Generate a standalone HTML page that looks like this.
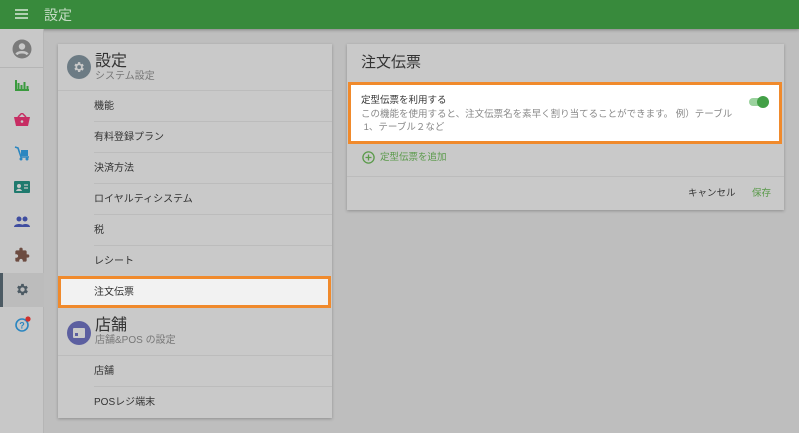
<!DOCTYPE html>
<html><head><meta charset="utf-8"><style>
*{box-sizing:border-box;margin:0;padding:0}
body{width:799px;height:433px;overflow:hidden;background:#bebebe;font-family:"Liberation Sans","Noto Sans CJK JP",sans-serif;position:relative;color:#333}
div{line-height:1.2}
.top{position:absolute;left:0;top:0;width:799px;height:29px;background:#388a3c;box-shadow:0 1px 3px rgba(0,0,0,.3)}
.top .t{position:absolute;left:44px;top:7px;color:#c5dcc5;font-size:14px}
.side{position:absolute;left:0;top:29px;width:44px;height:404px;background:#c8c8c8;border-right:1px solid #b5b5b5}
.ic{position:absolute;left:12px}
.card{position:absolute;background:#c9c9c9;box-shadow:0 1px 3px rgba(0,0,0,.25)}
.it{position:absolute;left:36px;font-size:10px;color:#333;margin-top:2px}
.ln{position:absolute;left:36px;right:0;height:1px;background:#bcbcbc}
</style></head><body>
<div class="top"><svg style="position:absolute;left:15px;top:9px" width="13" height="10"><path d="M0 1h13M0 5h13M0 9h13" stroke="#d8e8d8" stroke-width="1.6"/></svg><div class="t">設定</div></div>
<div class="side">
<svg class="ic" style="top:10px;left:12px" width="20" height="20" viewBox="0 0 20 20"><circle cx="10" cy="10" r="9.5" fill="#7a7a7a"/><circle cx="10" cy="7.5" r="3.2" fill="#c8c8c8"/><path d="M4.5 15.5c1.5-3 9.5-3 11 0" stroke="#c8c8c8" stroke-width="2.6" fill="none"/></svg>
<div style="position:absolute;left:0;top:38px;width:44px;height:1px;background:#b5b5b5"></div>
<svg class="ic" style="top:50px;left:15px" width="14" height="12"><path d="M1 1v10h13M3.5 4v6M6.5 6v4M9.5 3v7M12.5 7v3" stroke="#3a9a3e" stroke-width="2" fill="none"/></svg>
<svg class="ic" style="top:84px;left:14px" width="16" height="13"><path d="M0 4h16l-2 9H2z" fill="#c72d63"/><path d="M4 4l4-4 4 4" stroke="#c72d63" stroke-width="1.5" fill="none"/><circle cx="8" cy="8.5" r="1.3" fill="#c8c8c8"/></svg>
<svg class="ic" style="top:117px;left:14px" width="16" height="15"><path d="M1 1l3 1 3 9h8" stroke="#2b86c0" stroke-width="1.6" fill="none"/><rect x="7" y="4" width="7" height="6" fill="#2b86c0"/><circle cx="7" cy="13" r="1.5" fill="#2b86c0"/><circle cx="13" cy="13" r="1.5" fill="#2b86c0"/></svg>
<svg class="ic" style="top:152px;left:14px" width="16" height="12"><rect width="16" height="12" rx="1" fill="#1f7a6e"/><circle cx="5" cy="5" r="2" fill="#c8c8c8"/><path d="M2 10c1-3 5-3 6 0z" fill="#c8c8c8"/><path d="M10 4h4M10 7h4" stroke="#c8c8c8" stroke-width="1.3"/></svg>
<svg class="ic" style="top:187px;left:14px" width="16" height="11"><circle cx="5" cy="3" r="2.5" fill="#3f4da0"/><circle cx="11" cy="3" r="2.5" fill="#3f4da0"/><path d="M0 11c0-4 10-4 10 0zM7 11c0-4 9-4 9 0z" fill="#3f4da0"/></svg>
<svg class="ic" style="top:218px;left:14px" width="16" height="16" viewBox="0 0 24 24"><path d="M20.5 11H19V7c0-1.1-.9-2-2-2h-4V3.5a2.5 2.5 0 0 0-5 0V5H4c-1.1 0-2 .9-2 2v3.8h1.5c1.5 0 2.7 1.2 2.7 2.7S5 16.2 3.5 16.2H2V20c0 1.1.9 2 2 2h3.8v-1.5c0-1.5 1.2-2.7 2.7-2.7s2.7 1.2 2.7 2.7V22H17c1.1 0 2-.9 2-2v-4h1.5a2.5 2.5 0 0 0 0-5z" fill="#6d4c41"/></svg>
<div style="position:absolute;left:0;top:244px;width:44px;height:34px;background:#bcbcbc;border-left:3px solid #4c5a63"></div>
<svg class="ic" style="top:253px;left:15px" width="15" height="15" viewBox="0 0 24 24"><path d="M19.4 13a7.6 7.6 0 0 0 0-2l2.1-1.6-2-3.5-2.5 1a7.3 7.3 0 0 0-1.7-1L15 3h-4l-.4 2.7a7.3 7.3 0 0 0-1.7 1l-2.5-1-2 3.5L6.6 11a7.6 7.6 0 0 0 0 2l-2.1 1.6 2 3.5 2.5-1a7.3 7.3 0 0 0 1.7 1L11 21h4l.4-2.7a7.3 7.3 0 0 0 1.7-1l2.5 1 2-3.5zM13 15.5A3.5 3.5 0 1 1 13 8.5a3.5 3.5 0 0 1 0 7z" fill="#4c5a63" transform="translate(-1 0)"/></svg>
<svg class="ic" style="top:287px;left:14px" width="18" height="16"><circle cx="8" cy="9" r="6" stroke="#2b86c0" stroke-width="1.6" fill="none"/><text x="5.3" y="12.5" font-size="9" font-weight="bold" fill="#2b86c0" font-family="Liberation Sans">?</text><circle cx="14" cy="3" r="2.6" fill="#d0312d"/></svg>
</div>

<div class="card" style="left:58px;top:44px;width:274px;height:374px">
<svg style="position:absolute;left:9px;top:11px" width="24" height="24" viewBox="0 0 24 24"><circle cx="12" cy="12" r="12" fill="#6c7b84"/><g transform="translate(5.5 5.5) scale(.55)"><path d="M19.4 13a7.6 7.6 0 0 0 0-2l2.1-1.6-2-3.5-2.5 1a7.3 7.3 0 0 0-1.7-1L15 3h-4l-.4 2.7a7.3 7.3 0 0 0-1.7 1l-2.5-1-2 3.5L6.6 11a7.6 7.6 0 0 0 0 2l-2.1 1.6 2 3.5 2.5-1a7.3 7.3 0 0 0 1.7 1L11 21h4l.4-2.7a7.3 7.3 0 0 0 1.7-1l2.5 1 2-3.5zM13 15.5A3.5 3.5 0 1 1 13 8.5a3.5 3.5 0 0 1 0 7z" fill="#c9c9c9" transform="translate(-1 0)"/></g></svg>
<div style="position:absolute;left:37px;top:10px;font-size:16px;line-height:16px;color:#333">設定</div>
<div style="position:absolute;left:37px;top:28px;font-size:10px;line-height:10px;color:#777">システム設定</div>
<div style="position:absolute;left:0;right:0;top:46px;height:1px;background:#bcbcbc"></div>
<div class="it" style="top:55px">機能</div><div class="ln" style="top:77px"></div>
<div class="it" style="top:86px">有料登録プラン</div><div class="ln" style="top:108px"></div>
<div class="it" style="top:117px">決済方法</div><div class="ln" style="top:139px"></div>
<div class="it" style="top:148px">ロイヤルティシステム</div><div class="ln" style="top:170px"></div>
<div class="it" style="top:179px">税</div><div class="ln" style="top:201px"></div>
<div class="it" style="top:210px">レシート</div>
<div style="position:absolute;left:0;top:232px;width:273px;height:32px;background:#f2f2f2;border:3px solid #f08a2c"></div>
<div class="it" style="top:241px">注文伝票</div>
<svg style="position:absolute;left:9px;top:277px" width="24" height="24"><circle cx="12" cy="12" r="12" fill="#5c5fa0"/><rect x="6" y="7" width="12" height="10" rx="1" fill="#c9c9c9"/><rect x="8" y="12" width="3" height="3" fill="#5c5fa0"/></svg>
<div style="position:absolute;left:37px;top:274px;font-size:16px;line-height:16px;color:#333">店舗</div>
<div style="position:absolute;left:37px;top:292px;font-size:10px;line-height:10px;color:#777">店舗&amp;POS の設定</div>
<div style="position:absolute;left:0;right:0;top:311px;height:1px;background:#bcbcbc"></div>
<div class="it" style="top:320px">店舗</div><div class="ln" style="top:342px"></div>
<div class="it" style="top:351px">POSレジ端末</div>
</div>

<div class="card" style="left:347px;top:44px;width:437px;height:166px">
<div style="position:absolute;left:14px;top:10px;font-size:15px;color:#333">注文伝票</div>
<div style="position:absolute;left:1px;top:38px;width:434px;height:62px;background:#fff;border:3px solid #f08a2c"></div>
<div style="position:absolute;left:14px;top:51px;font-size:9.5px;color:#333">定型伝票を利用する</div>
<div style="position:absolute;left:14px;top:64px;width:380px;white-space:nowrap;font-size:9.5px;color:#888;line-height:13px">この機能を使用すると、注文伝票名を素早く割り当てることができます。 例）テーブル<br>&nbsp;1、テーブル２など</div>
<div style="position:absolute;left:402px;top:54px;width:20px;height:8px;border-radius:4px;background:#9bd29e"></div>
<div style="position:absolute;left:410px;top:52px;width:12px;height:12px;border-radius:6px;background:#43a047"></div>
<svg style="position:absolute;left:15px;top:107px" width="13" height="13"><circle cx="6.5" cy="6.5" r="5.6" stroke="#5a9a4a" stroke-width="1.3" fill="none"/><path d="M6.5 3.5v6M3.5 6.5h6" stroke="#5a9a4a" stroke-width="1.3"/></svg>
<div style="position:absolute;left:33px;top:108px;font-size:9.5px;color:#5a9a4a">定型伝票を追加</div>
<div style="position:absolute;left:0;right:0;top:132px;height:1px;background:#bcbcbc"></div>
<div style="position:absolute;left:341px;top:144px;font-size:9.5px;color:#333">キャンセル</div>
<div style="position:absolute;left:405px;top:144px;font-size:9.5px;color:#5a9a4a">保存</div>
</div>
</body></html>
